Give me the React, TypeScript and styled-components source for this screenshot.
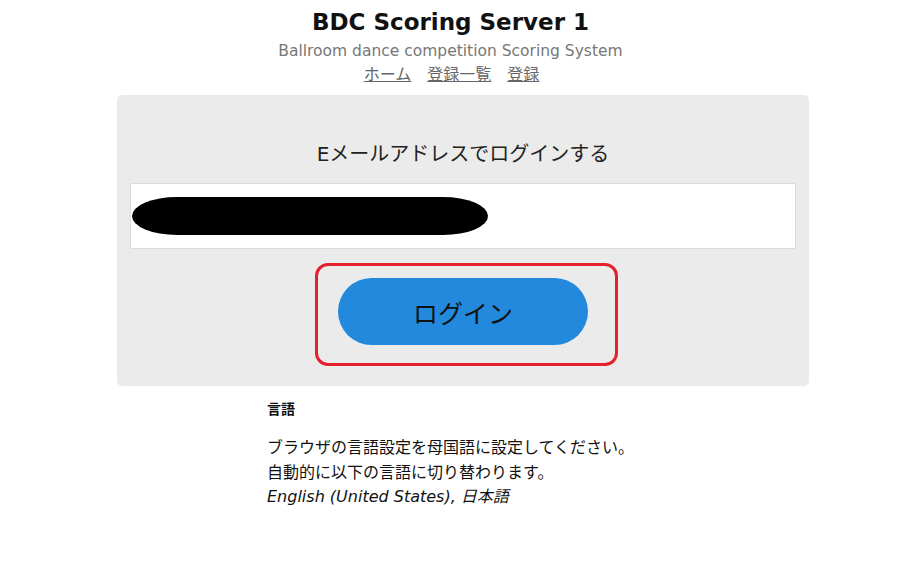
import styled, { createGlobalStyle } from 'styled-components';

const GlobalStyle = createGlobalStyle`
  html, body {
    margin: 0;
    padding: 0;
    background: #ffffff;
  }
  body {
    font-family: 'DejaVu Sans', 'Noto Sans CJK JP', sans-serif;
    color: #111;
  }
`;

const Page = styled.div`
  width: 901px;
  display: flex;
  flex-direction: column;
`;

const Header = styled.header`
  display: flex;
  flex-direction: column;
  align-items: center;
  padding-top: 7px;
`;

const Title = styled.h1`
  margin: 0;
  font-size: 23px;
  line-height: 30px;
  font-weight: bold;
  color: #111;
`;

const Subtitle = styled.div`
  margin-top: 2px;
  font-size: 15.5px;
  line-height: 24px;
  color: #777;
`;

const Nav = styled.nav`
  display: flex;
  gap: 16px;
  font-size: 16px;
  line-height: 24px;
  margin-left: 2px;
`;

const NavLink = styled.a`
  color: #666;
  text-decoration: underline;
  cursor: pointer;
`;

const Card = styled.section`
  margin: 8px 0 0 117px;
  width: 692px;
  height: 291px;
  box-sizing: border-box;
  background: #ebebeb;
  border-radius: 5px;
  display: flex;
  flex-direction: column;
  align-items: center;
  padding: 43px 13px 0;
`;

const CardTitle = styled.h2`
  margin: 0;
  font-size: 20px;
  line-height: 32px;
  font-weight: normal;
  color: #222;
`;

const EmailBox = styled.div`
  margin-top: 13px;
  width: 100%;
  height: 66px;
  box-sizing: border-box;
  background: #fff;
  border: 1px solid #dcdcdc;
  display: flex;
  align-items: center;
  padding-left: 1px;
`;

const Redaction = styled.div`
  width: 356px;
  height: 38px;
  background: #000;
  border-radius: 45px / 19px;
`;

const Highlight = styled.div`
  margin-top: 14px;
  margin-left: 7px;
  width: 303px;
  height: 103px;
  box-sizing: border-box;
  border: 3px solid #e3202b;
  border-radius: 13px;
  display: flex;
  justify-content: center;
  align-items: flex-start;
  padding: 12px 7px 0 0;
`;

const LoginButton = styled.button`
  width: 250px;
  height: 67px;
  border: none;
  border-radius: 34px;
  background: #2289dd;
  color: #111;
  font-family: 'Noto Sans CJK JP', sans-serif;
  font-size: 25px;
  cursor: pointer;
`;

const Info = styled.div`
  margin: 12px 0 0 267px;
  display: flex;
  flex-direction: column;
`;

const InfoHeading = styled.h3`
  margin: 0;
  font-size: 14px;
  line-height: 22px;
  font-weight: bold;
`;

const InfoText = styled.p`
  margin: 16px 0 0;
  font-size: 16px;
  line-height: 24.5px;
  color: #111;
`;

const Languages = styled.em`
  font-style: italic;
`;

export default function App() {
  return (
    <Page>
      <GlobalStyle />
      <Header>
        <Title>BDC Scoring Server 1</Title>
        <Subtitle>Ballroom dance competition Scoring System</Subtitle>
        <Nav>
          <NavLink>ホーム</NavLink>
          <NavLink>登録一覧</NavLink>
          <NavLink>登録</NavLink>
        </Nav>
      </Header>
      <Card>
        <CardTitle>Eメールアドレスでログインする</CardTitle>
        <EmailBox>
          <Redaction />
        </EmailBox>
        <Highlight>
          <LoginButton>ログイン</LoginButton>
        </Highlight>
      </Card>
      <Info>
        <InfoHeading>言語</InfoHeading>
        <InfoText>
          ブラウザの言語設定を母国語に設定してください。
          <br />
          自動的に以下の言語に切り替わります。
          <br />
          <Languages>English (United States), 日本語</Languages>
        </InfoText>
      </Info>
    </Page>
  );
}
